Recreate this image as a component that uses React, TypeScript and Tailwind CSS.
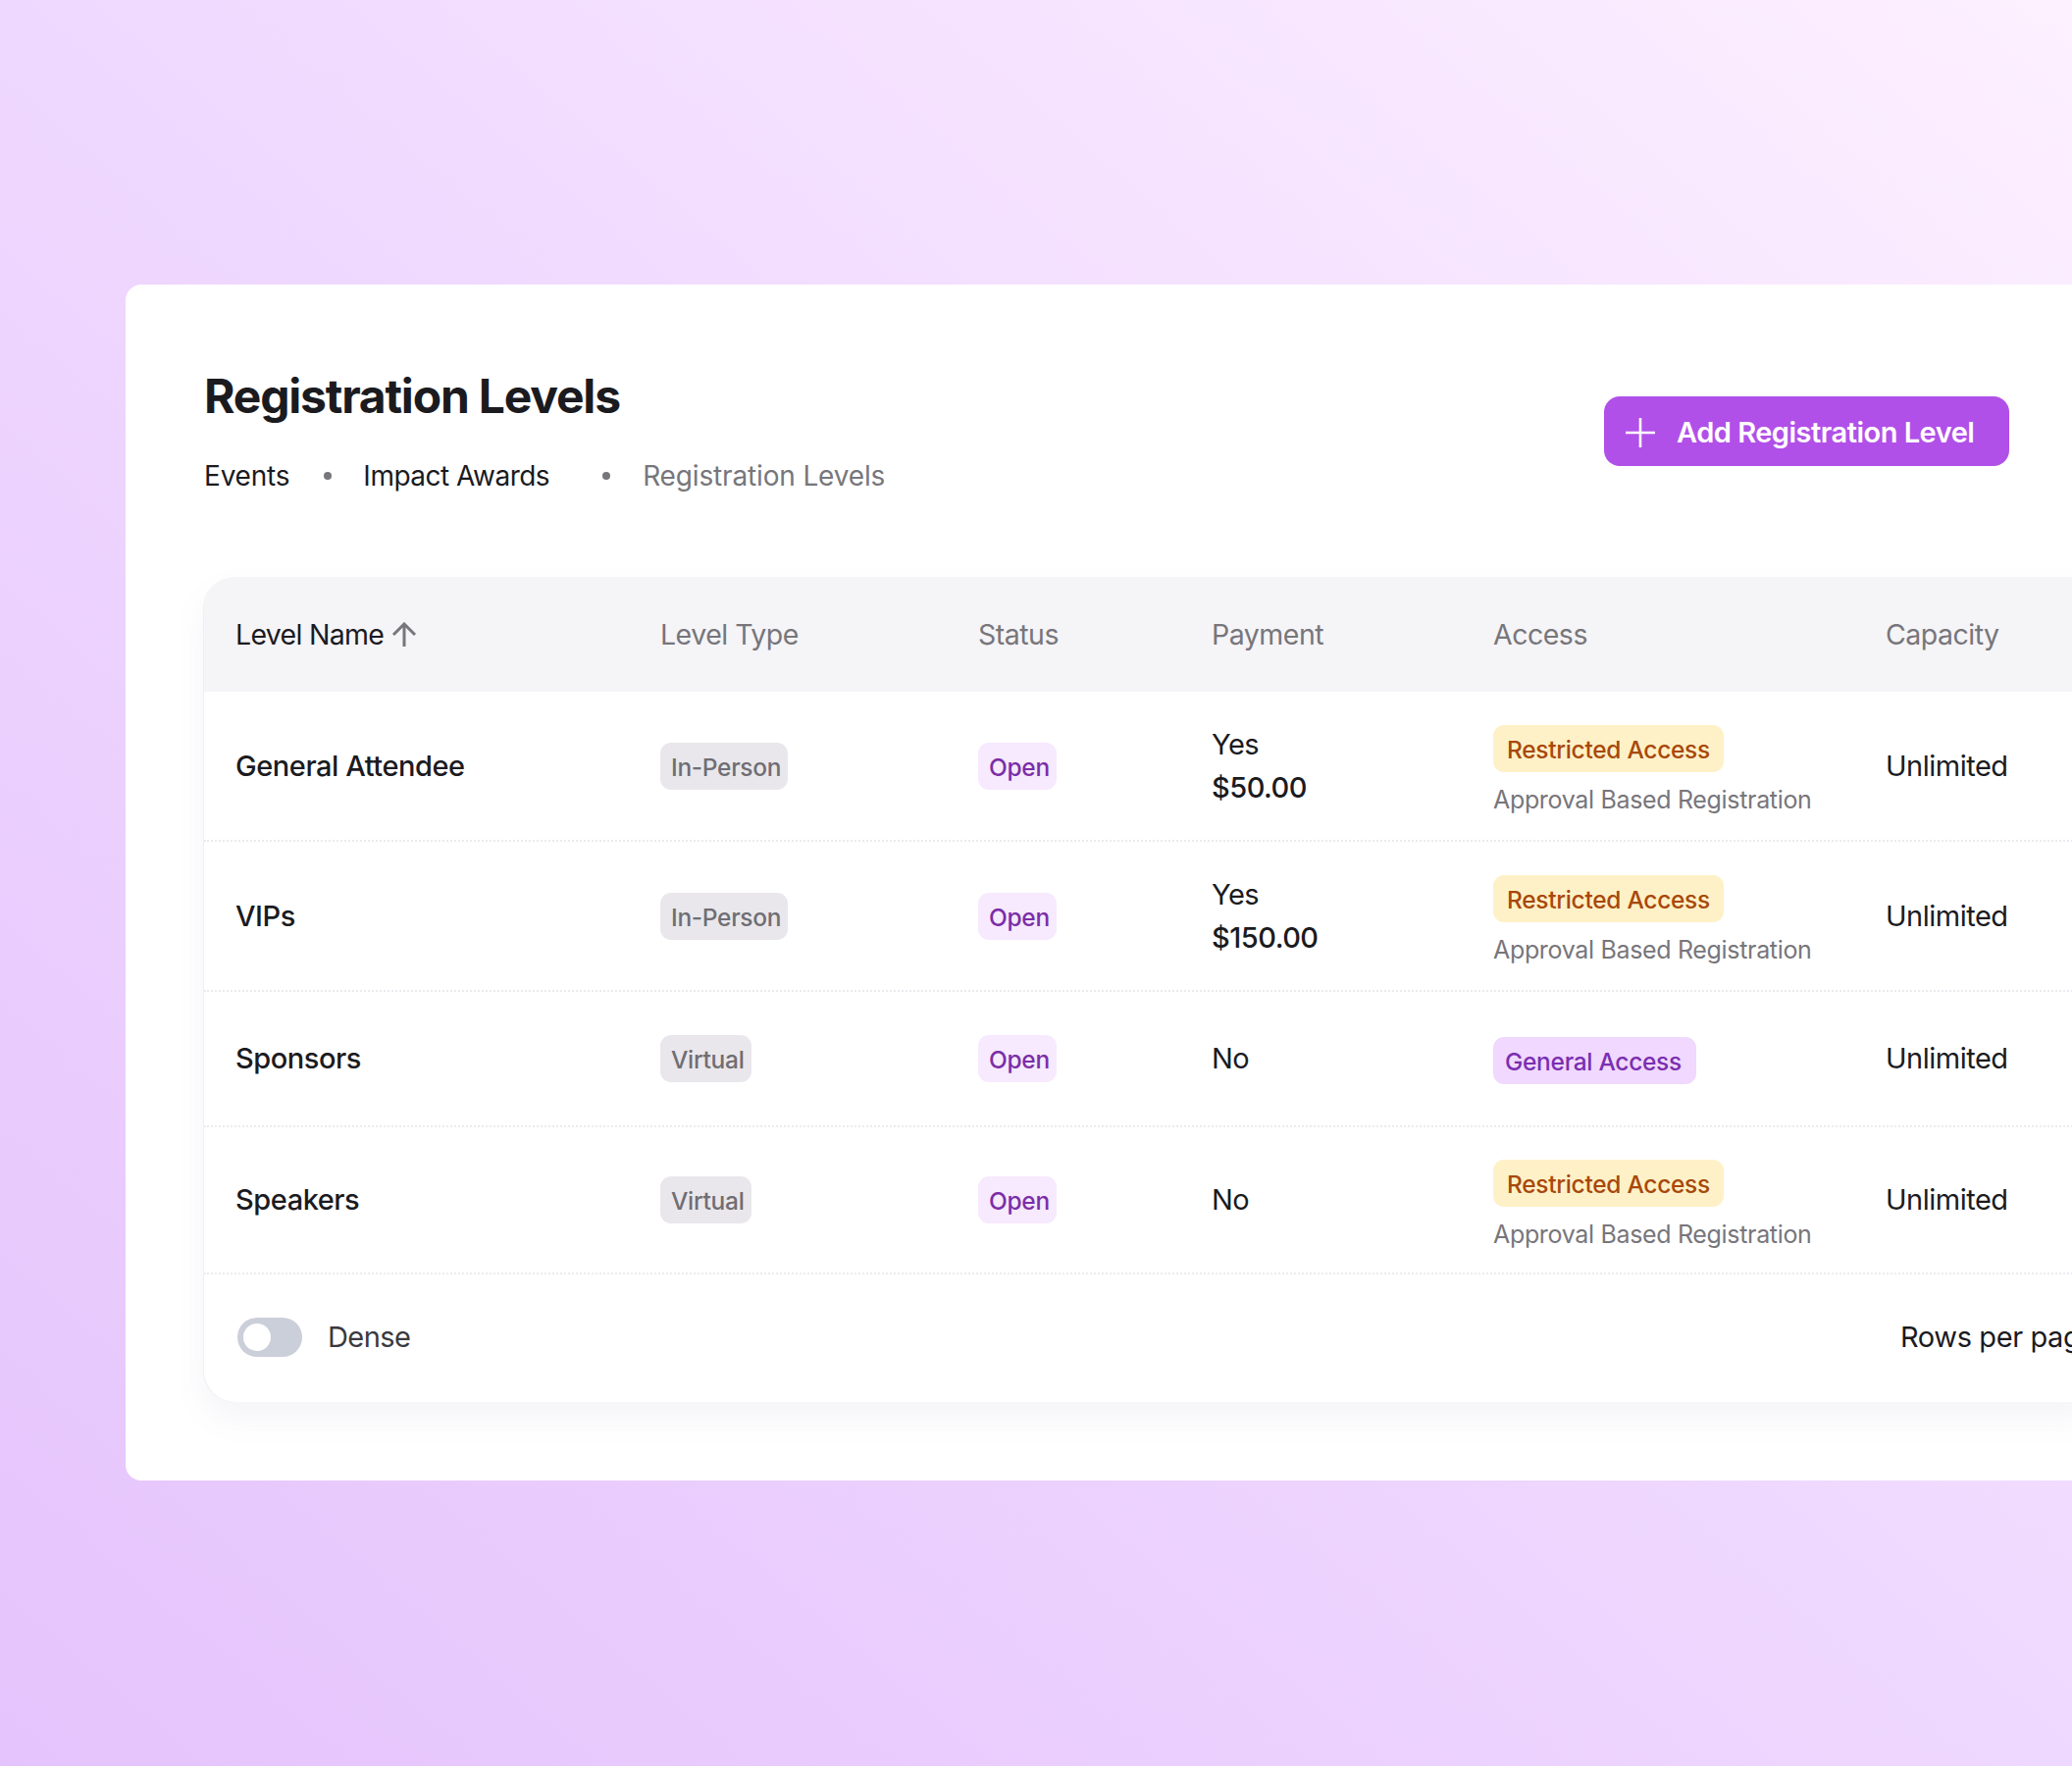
const FONT = "font-['Inter','Noto_Sans',sans-serif]";

type Access = "restricted" | "general";

interface Level {
  name: string;
  type: string;
  paid: boolean;
  price?: string;
  access: Access;
  height: string;
}

const LEVELS: Level[] = [
  { name: "General Attendee", type: "In-Person", paid: true, price: "$50.00", access: "restricted", height: "h-[153px]" },
  { name: "VIPs", type: "In-Person", paid: true, price: "$150.00", access: "restricted", height: "h-[153px]" },
  { name: "Sponsors", type: "Virtual", paid: false, access: "general", height: "h-[138px]" },
  { name: "Speakers", type: "Virtual", paid: false, access: "restricted", height: "h-[150px]" },
];

const COLS = "grid grid-cols-[465px_324px_238px_287px_400px_1fr] items-center";

function Badge({ children, className }: { children: React.ReactNode; className: string }) {
  return (
    <span className={`inline-flex h-[48px] items-center rounded-[11px] pt-[3px] text-[24.5px] font-medium tracking-[-0.3px] ${className}`}>
      {children}
    </span>
  );
}

function Row({ level }: { level: Level }) {
  return (
    <div className={`${COLS} ${level.height} border-b-2 border-dotted border-[#eceaee]`}>
      <div className="pl-[32px] text-[29px] font-medium tracking-[-0.45px] text-[#1b1b1f]">{level.name}</div>
      <div>
        <Badge className="bg-[#e9e7eb] pl-[11px] pr-[7px] text-[#6f6e74]">{level.type}</Badge>
      </div>
      <div>
        <Badge className="bg-[#f7e9fe] pl-[11px] pr-[7px] text-[#7b2ea6]">Open</Badge>
      </div>
      <div className="flex flex-col gap-[6px] text-[29px] tracking-[-0.5px] text-[#1b1b1f]">
        <span className="leading-[38px]">{level.paid ? "Yes" : "No"}</span>
        {level.price && <span className="font-medium leading-[38px]">{level.price}</span>}
      </div>
      <div className={`flex flex-col items-start ${level.access === "restricted" ? "gap-[12px] pt-[9px]" : "pt-[3px]"}`}>
        {level.access === "restricted" ? (
          <>
            <Badge className="bg-[#fef1c7] px-[14px] text-[#a8480b]">Restricted Access</Badge>
            <span className="text-[25px] leading-[32px] tracking-[-0.33px] text-[#77767b]">Approval Based Registration</span>
          </>
        ) : (
          <Badge className="bg-[#f0d8fe] pl-[12px] pr-[15px] text-[#7a2eb0]">General Access</Badge>
        )}
      </div>
      <div className="text-[29px] tracking-[-0.5px] text-[#1b1b1f]">Unlimited</div>
    </div>
  );
}

export default function App() {
  return (
    <div className={`${FONT} h-[1800px] w-[2112px] overflow-hidden bg-[linear-gradient(to_bottom_left,#fdf0ff,#efd8ff_50%,#e5c3fc)] pl-[128px] pt-[290px]`}>
      <div className="h-[1219px] w-[2000px] rounded-l-[16px] bg-white pl-[80px] pt-[84px]">
        <div className="flex w-[1840px] items-start justify-between">
          <div>
            <h1 className="text-[48px] font-bold leading-[60px] tracking-[-1.2px] text-[#1b1b1f]">Registration Levels</h1>
            <div className="mt-[33px] flex items-center text-[28px] leading-[36px] tracking-[-0.5px]">
              <span className="tracking-[-0.2px] text-[#1b1b1f]">Events</span>
              <span className="ml-[35px] mr-[32px] h-[8px] w-[8px] rounded-full bg-[#77767b]" />
              <span className="text-[#1b1b1f]">Impact Awards</span>
              <span className="ml-[54px] mr-[33px] h-[8px] w-[8px] rounded-full bg-[#77767b]" />
              <span className="tracking-[-0.15px] text-[#77767b]">Registration Levels</span>
            </div>
          </div>
          <button className="mt-[30px] flex h-[71px] w-[413px] items-center gap-[22px] rounded-[16px] bg-[#b150e8] pl-[22px] pt-[2px] text-[29px] font-semibold tracking-[-0.5px] text-white">
            <svg width="30" height="30" viewBox="0 0 30 30" fill="none" stroke="currentColor" strokeWidth="2.6">
              <path d="M15 0v30M0 15h30" />
            </svg>
            Add Registration Level
          </button>
        </div>

        <div className="mt-[85px] h-[841px] w-[1920px] rounded-l-[32px] bg-white shadow-[0_16px_32px_rgba(120,110,160,0.08),-1px_0_0_#f4f3f6]">
          <div className={`${COLS} h-[117px] rounded-tl-[32px] bg-[#f5f4f7] pt-[1px] text-[28.5px] tracking-[-0.5px] text-[#77767b]`}>
            <div className="flex items-center gap-[8px] pl-[32px] tracking-[-0.7px] text-[#1b1b1f]">
              Level Name
              <svg width="26" height="26" viewBox="0 0 26 26" fill="none" stroke="#77767b" strokeWidth="3">
                <path d="M13 25V2M2 13 13 2l11 11" />
              </svg>
            </div>
            <div>Level Type</div>
            <div>Status</div>
            <div>Payment</div>
            <div>Access</div>
            <div>Capacity</div>
          </div>
          {LEVELS.map((level) => (
            <Row key={level.name} level={level} />
          ))}
          <div className="flex h-[131px] items-center justify-between pb-[4px] pl-[34px]">
            <div className="flex items-center gap-[26px]">
              <div className="flex h-[40px] w-[66px] items-center rounded-full bg-[#cbcfd9] pl-[6px]">
                <div className="h-[28px] w-[28px] rounded-full bg-white" />
              </div>
              <span className="text-[29px] tracking-[-0.6px] text-[#3a3a40]">Dense</span>
            </div>
            <div className="w-[191px] whitespace-nowrap text-[29px] tracking-[-0.4px] text-[#1b1b1f]">Rows per page</div>
          </div>
        </div>
      </div>
    </div>
  );
}
